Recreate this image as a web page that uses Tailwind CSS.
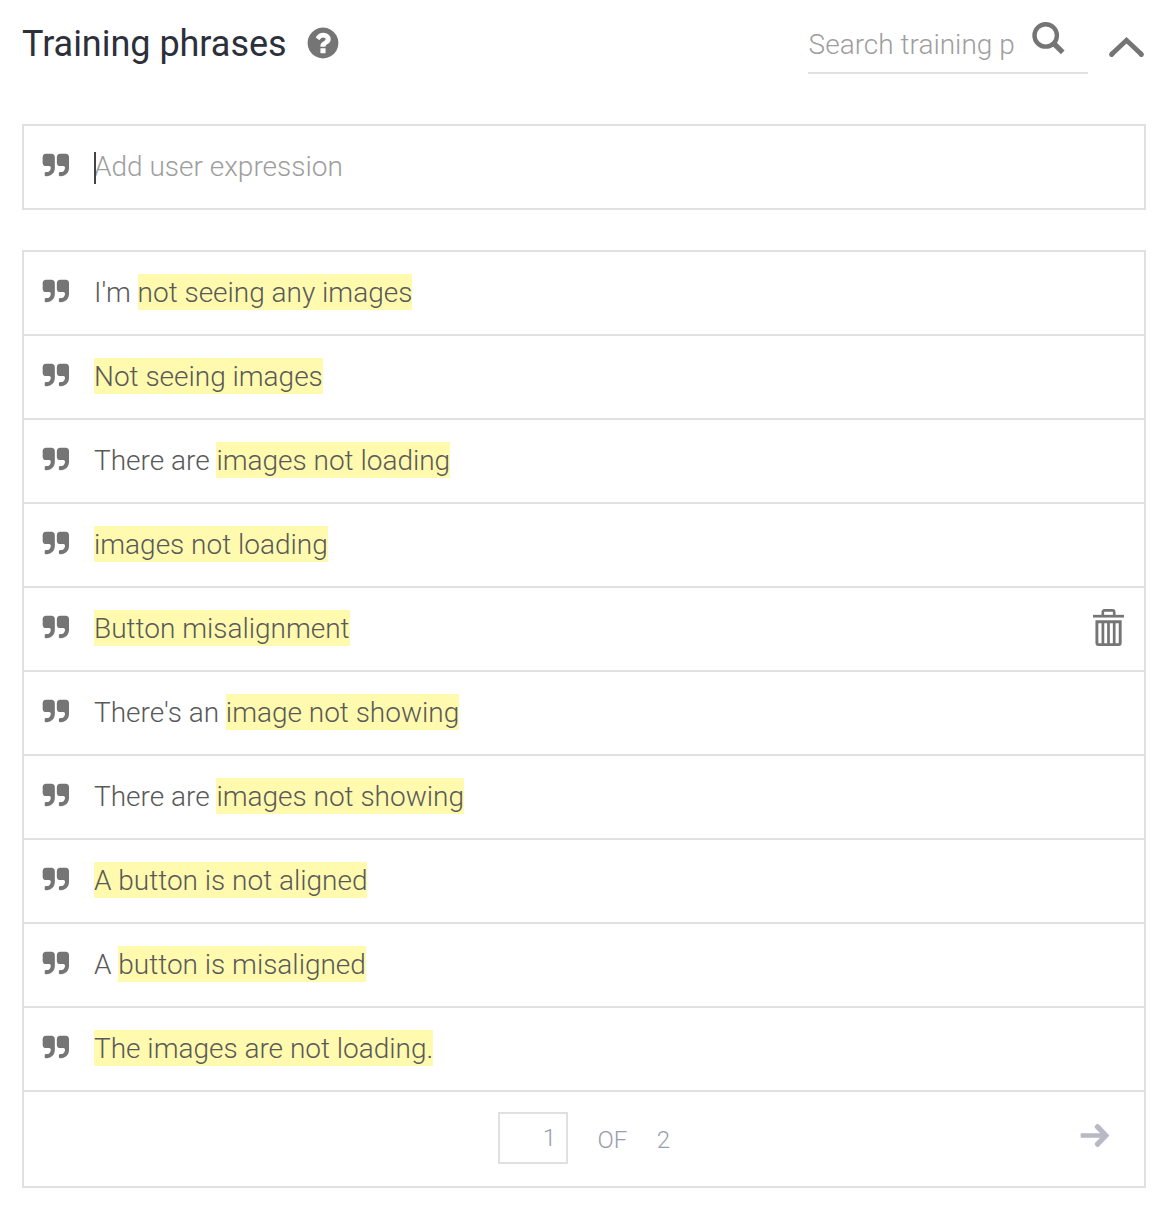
<!DOCTYPE html>
<html lang="en">
<head>
<meta charset="utf-8">
<title>Training phrases</title>
<script src="https://cdn.jsdelivr.net/npm/@tailwindcss/browser@4"></script>
</head>
<body class="bg-white font-['Roboto',sans-serif] text-[28px] font-light text-[#595959]">
<svg class="hidden">
  <symbol id="quote" viewBox="22 10 1768 1768"><path d="M832 320v704q0 104-40.500 198.500t-109.500 163.500-163.500 109.500-198.500 40.500h-64q-26 0-45-19t-19-45v-128q0-26 19-45t45-19h64q106 0 181-75t75-181v-32q0-40-28-68t-68-28h-224q-80 0-136-56t-56-136v-384q0-80 56-136t136-56h384q80 0 136 56t56 136zm896 0v704q0 104-40.500 198.500t-109.500 163.500-163.500 109.500-198.500 40.500h-64q-26 0-45-19t-19-45v-128q0-26 19-45t45-19h64q106 0 181-75t75-181v-32q0-40-28-68t-68-28h-224q-80 0-136-56t-56-136v-384q0-80 56-136t136-56h384q80 0 136 56t56 136z"/></symbol>
</svg>
<main class="pl-[22px] pr-3">
  <header class="flex h-[124px] items-start">
    <h1 class="mt-[23px] text-[36px] leading-[42px] font-normal tracking-[-0.03px] whitespace-nowrap text-[#2b303b]">Training phrases</h1>
    <svg class="mt-[25px] ml-[18.500px] size-9 fill-[#757575]" viewBox="0 0 1792 1792"><path d="M1024 1376v-192q0-14-9-23t-23-9h-192q-14 0-23 9t-9 23v192q0 14 9 23t23 9h192q14 0 23-9t9-23zm256-672q0-88-55.500-163t-138.500-116-170-41q-243 0-371 213-15 24 8 42l132 100q7 6 19 6 16 0 25-12 53-68 86-92 34-24 86-24 48 0 85.500 26t37.500 59q0 38-20 61t-68 45q-63 28-115.500 86.500t-52.500 125.500v36q0 14 9 23t23 9h192q14 0 23-9t9-23q0-19 21.500-49.500t54.500-49.500q32-18 49-28.500t46-35 44.500-48 28-60.500 12.500-81zm384 192q0 209-103 385.500t-279.500 279.500-385.500 103-385.500-103-279.500-279.500-103-385.500 103-385.500 279.500-279.500 385.500-103 385.500 103 279.500 279.500 103 385.500z"/></svg>
    <div class="ml-auto flex h-[74px] w-[280px] items-start border-b-2 border-[#e0e0e0] text-[#9e9e9e]">
      <span class="mt-[24px] w-[224px] pl-[0.6px] leading-[42px] whitespace-nowrap">Search training p</span>
      <svg class="mt-[21px] h-[35px] w-[35px]" viewBox="0 0 35 35" fill="none" stroke="#757575"><circle cx="13.700" cy="14.400" r="11.200" stroke-width="4.400"/><path d="M21.500 22.400l2.500 2.500" stroke-width="4.500"/><path d="M24 24.700l4.900 4.900" stroke-width="5.200" stroke-linecap="square"/></svg>
    </div>
    <svg class="mt-[35px] mr-[1px] ml-[20px] h-[24px] w-[37px]" viewBox="0 0 37 24" fill="none" stroke="#757575" stroke-width="5"><path d="M3.400 19.600L18.500 5.300l15.100 14.300" stroke-width="4.800"/><path d="M4.200 18.800L3.600 19.400M32.800 18.800L33.400 19.400" stroke-linecap="round"/></svg>
  </header>

  <div class="flex h-[86px] border-2 border-[#e0e0e0] leading-[82px] text-[#9e9e9e]">
    <svg class="mt-[26px] ml-[18px] mr-[24px] size-7 fill-[#757575]"><use href="#quote"/></svg>
    <div class="relative">Add user expression<span class="absolute top-[26px] left-0 h-8 w-[2px] bg-[#444]"></span></div>
  </div>

  <div class="mt-10 divide-y-2 divide-[#e0e0e0] border-2 border-[#e0e0e0]">
    <div id="phrases" class="divide-y-2 divide-[#e0e0e0]"></div>
    <div class="flex h-[94px] items-start text-[24px] text-[#989daf]">
      <div class="mt-[20px] ml-[474px] h-[52px] w-[70px] border-2 border-[#e0e0e0] pr-[10px] text-right leading-[48px]">1</div>
      <span class="mt-[26px] ml-[29.500px] leading-[44px]">OF</span>
      <span class="mt-[26px] ml-[29.400px] leading-[44px]">2</span>
      <svg class="mt-[30px] mr-[34px] ml-auto h-[28px] w-[30px]" viewBox="0 0 30 28"><path fill="#b7b9c4" d="M1.500 11.200H20.200L15.200 6.200Q13.900 4.900 15.200 3.600L16.300 2.400Q17.600 1.100 18.900 2.400L29.400 13.500L18.900 24.500Q17.600 25.800 16.300 24.500L15.200 23.300Q13.900 22 15.200 20.700L20.200 15.700H1.500Q.6 15.700 .6 14.800V12.100Q.6 11.200 1.500 11.200Z"/></svg>
    </div>
  </div>
</main>
<script>
const phrases = [
  ["I'm ", "not seeing any images"],
  ["", "Not seeing images"],
  ["There are ", "images not loading"],
  ["", "images not loading"],
  ["", "Button misalignment", true],
  ["There's an ", "image not showing"],
  ["There are ", "images not showing"],
  ["", "A button is not aligned"],
  ["A ", "button is misaligned"],
  ["", "The images are not loading."]
];
const trash = `<svg class="mt-[20px] mr-[19px] ml-auto h-[40px] w-[33px]" viewBox="0 0 33 40" fill="none" stroke="#757575"><path d="M1 8.200H32" stroke-width="2.700"/><path d="M10.800 7V4q0-1.600 1.600-1.600h8.200q1.600 0 1.600 1.600V7" stroke-width="2.600"/><path d="M4.900 13.800H28.200V35q0 1.600-1.600 1.600H6.500q-1.600 0-1.600-1.600Z" stroke-width="2.900"/><path d="M10.900 14V36M16.500 14V36M22.200 14V36" stroke-width="2.700"/></svg>`;
document.getElementById('phrases').innerHTML = phrases.map(([plain, marked, hovered]) => `
  <div class="flex leading-[82px]">
    <svg class="mt-[26px] ml-[18px] mr-[24px] size-7 fill-[#757575]"><use href="#quote"/></svg>
    <div class="tracking-[-0.01px] whitespace-pre">${plain}<span class="bg-[#fffaae] pt-[2px] pb-[1px]">${marked}</span></div>
    ${hovered ? trash : ''}
  </div>`).join('');
</script>
</body>
</html>
